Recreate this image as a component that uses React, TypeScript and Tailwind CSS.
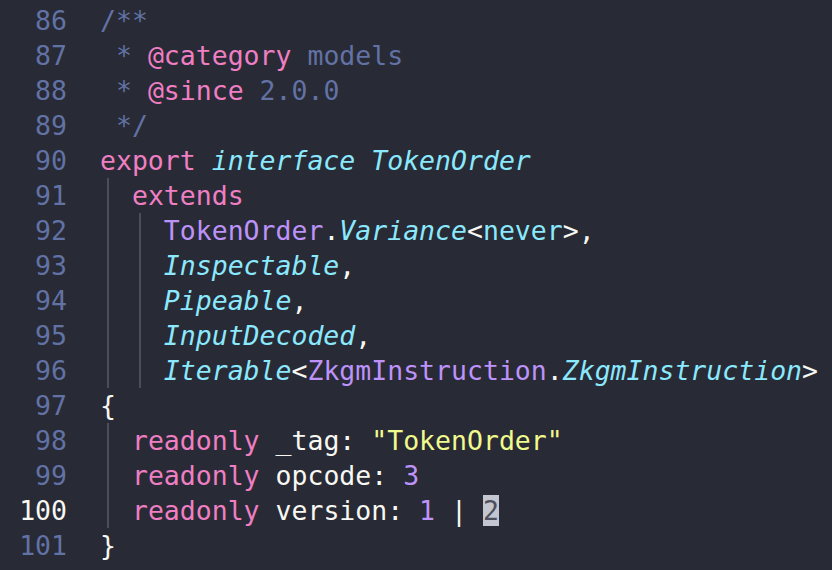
type Tok = { t: string; c?: string; i?: boolean; cursor?: boolean };

const pink = 'text-[#ef7fc2]';
const cyan = 'text-[#8be9fd]';
const purple = 'text-[#bd93f9]';
const fg = 'text-[#f8f8f2]';
const cmt = 'text-[#6272a4]';
const yellow = 'text-[#f1fa8c]';

// guides: number of indent guides drawn on the line
const lines: { n: number; guides: number; toks: Tok[] }[] = [
  { n: 86, guides: 0, toks: [{ t: '/**', c: cmt }] },
  { n: 87, guides: 0, toks: [{ t: ' * ', c: cmt }, { t: '@category', c: pink }, { t: ' models', c: cmt }] },
  { n: 88, guides: 0, toks: [{ t: ' * ', c: cmt }, { t: '@since', c: pink }, { t: ' 2.0.0', c: cmt }] },
  { n: 89, guides: 0, toks: [{ t: ' */', c: cmt }] },
  {
    n: 90,
    guides: 0,
    toks: [
      { t: 'export ', c: pink },
      { t: 'interface', c: cyan, i: true },
      { t: ' ' },
      { t: 'TokenOrder', c: cyan, i: true },
    ],
  },
  { n: 91, guides: 1, toks: [{ t: '  ' }, { t: 'extends', c: pink }] },
  {
    n: 92,
    guides: 2,
    toks: [
      { t: '    ' },
      { t: 'TokenOrder', c: purple },
      { t: '.', c: fg },
      { t: 'Variance', c: cyan, i: true },
      { t: '<', c: fg },
      { t: 'never', c: cyan },
      { t: '>,', c: fg },
    ],
  },
  { n: 93, guides: 2, toks: [{ t: '    ' }, { t: 'Inspectable', c: cyan, i: true }, { t: ',', c: fg }] },
  { n: 94, guides: 2, toks: [{ t: '    ' }, { t: 'Pipeable', c: cyan, i: true }, { t: ',', c: fg }] },
  { n: 95, guides: 2, toks: [{ t: '    ' }, { t: 'InputDecoded', c: cyan, i: true }, { t: ',', c: fg }] },
  {
    n: 96,
    guides: 2,
    toks: [
      { t: '    ' },
      { t: 'Iterable', c: cyan, i: true },
      { t: '<', c: fg },
      { t: 'ZkgmInstruction', c: purple },
      { t: '.', c: fg },
      { t: 'ZkgmInstruction', c: cyan, i: true },
      { t: '>', c: fg },
    ],
  },
  { n: 97, guides: 0, toks: [{ t: '{', c: fg }] },
  {
    n: 98,
    guides: 1,
    toks: [{ t: '  ' }, { t: 'readonly', c: pink }, { t: ' _tag: ', c: fg }, { t: '"TokenOrder"', c: yellow }],
  },
  {
    n: 99,
    guides: 1,
    toks: [{ t: '  ' }, { t: 'readonly', c: pink }, { t: ' opcode: ', c: fg }, { t: '3', c: purple }],
  },
  {
    n: 100,
    guides: 1,
    toks: [
      { t: '  ' },
      { t: 'readonly', c: pink },
      { t: ' version: ', c: fg },
      { t: '1', c: purple },
      { t: ' | ', c: fg },
      { t: '2', cursor: true },
    ],
  },
  { n: 101, guides: 0, toks: [{ t: '}', c: fg }] },
];

export default function App() {
  return (
    <div
      className="w-[832px] h-[570px] overflow-hidden bg-[#282a36] pt-[3px] text-[26.5px] leading-[35px] whitespace-pre"
      style={{ fontFamily: '"DejaVu Sans Mono", "Liberation Mono", monospace' }}
    >
      {lines.map((line) => (
        <div key={line.n} className="flex h-[35px]">
          <div
            className={`w-[67px] shrink-0 text-right ${line.n === 100 ? 'text-[#f8f8f2]' : 'text-[#6272a4]'}`}
          >
            {line.n}
          </div>
          <div className="relative pl-[33px]">
            {line.guides >= 1 && <div className="absolute left-[40px] top-0 h-full w-[2px] bg-[#4a4d5c]" />}
            {line.guides >= 2 && <div className="absolute left-[72px] top-0 h-full w-[2px] bg-[#4a4d5c]" />}
            {line.toks.map((tok, k) =>
              tok.cursor ? (
                <span key={k} className="bg-[#c3c5cf] text-[#4d4f5c]">
                  {tok.t}
                </span>
              ) : (
                <span key={k} className={`${tok.c ?? fg} ${tok.i ? 'italic' : ''}`}>
                  {tok.t}
                </span>
              )
            )}
          </div>
        </div>
      ))}
    </div>
  );
}
